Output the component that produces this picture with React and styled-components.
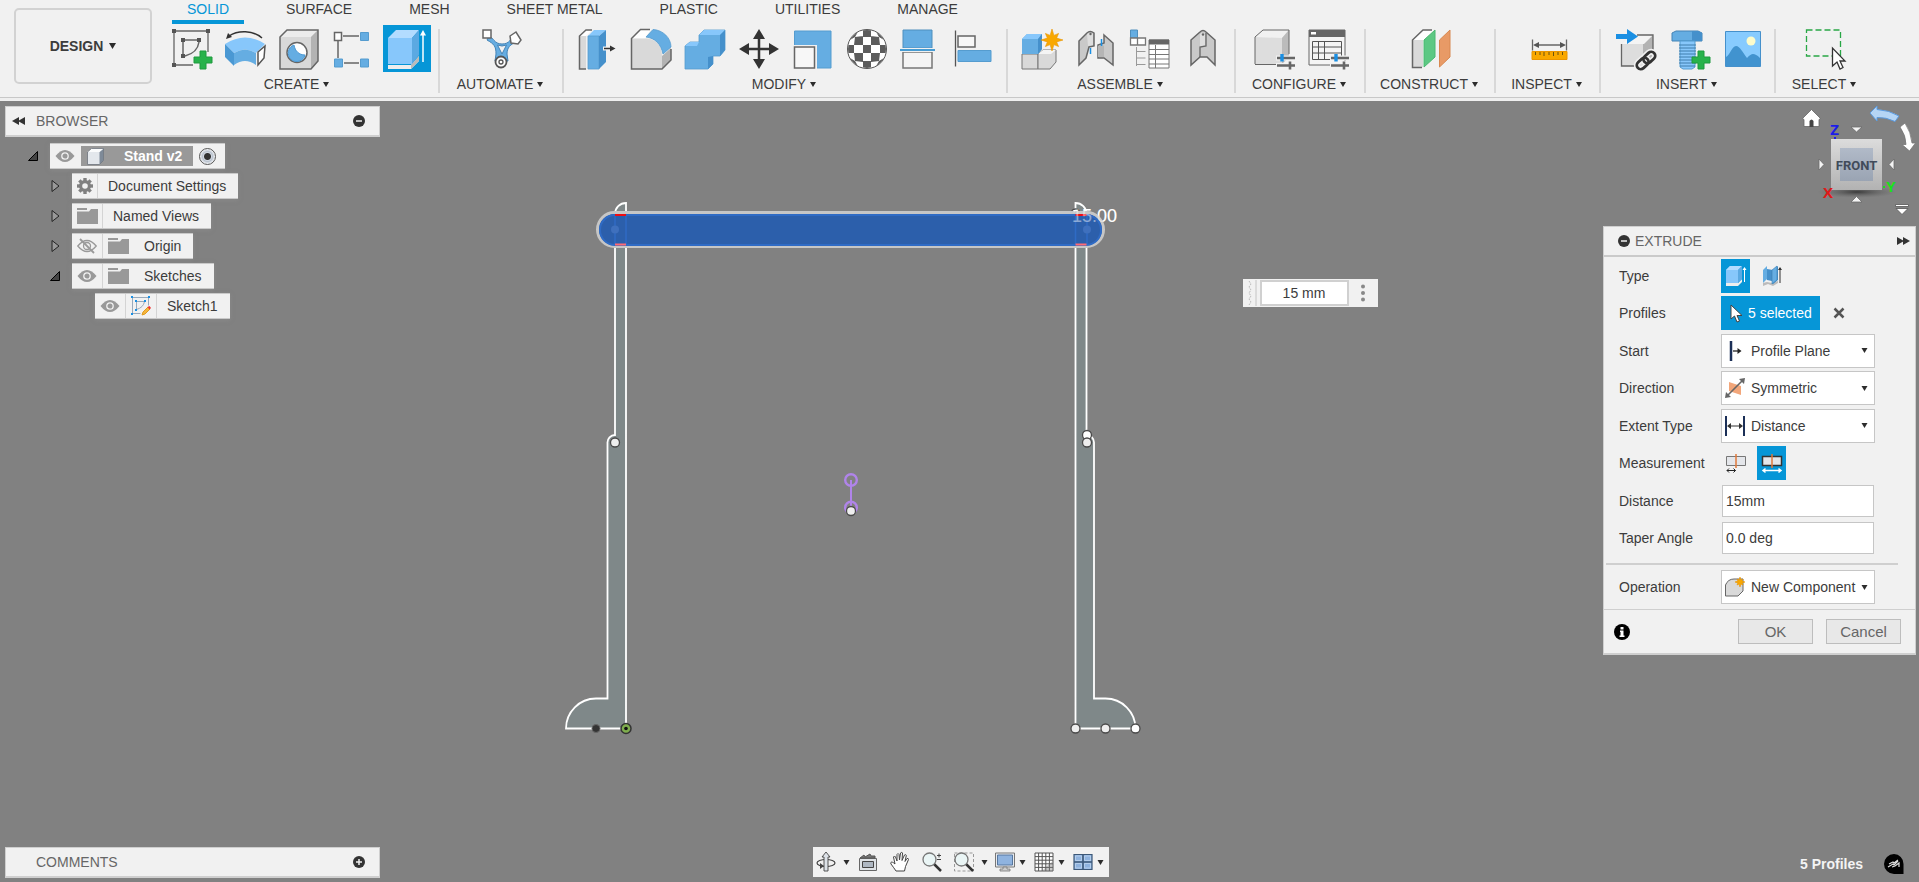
import React, { useState } from 'react'
import styled, { createGlobalStyle } from 'styled-components'

const GlobalStyle = createGlobalStyle`
  * {
    box-sizing: border-box;
  }
  body {
    margin: 0;
    font-family: "Liberation Sans", Arial, sans-serif;
    font-size: 14px;
    line-height: 16px;
    color: #3c3c3c;
    background: #818181;
  }
  button, input, select {
    font: inherit;
    color: inherit;
    margin: 0;
    padding: 0;
  }
  button {
    cursor: pointer;
  }
  svg {
    display: block;
    flex: none;
    overflow: visible;
  }
`

/* ---------- ribbon ---------- */

const Page = styled.div`
  display: flex;
  flex-direction: column;
  min-height: 100vh;
`

const Toolbar = styled.header`
  display: flex;
  gap: 5px;
  padding: 0 0 1px 14px;
  background: #f1f1f1;
  border-bottom: 1px solid #c8c8c8;
`

const ToolbarFrame = styled.div`
  padding-bottom: 3px;
  background: #efefef;
`

const DesignButton = styled.button`
  display: flex;
  align-items: center;
  justify-content: center;
  gap: 6px;
  width: 138px;
  height: 76px;
  margin-top: 8px;
  font-weight: bold;
  background: #f1f1f1;
  border: 2px solid #d2d2d2;
  border-radius: 5px;
`

const Ribbon = styled.div`
  flex: 1;
  min-width: 0;
`

const Tabs = styled.nav`
  display: flex;
  gap: 27px;
  padding-left: 15px;
`

const Tab = styled.a`
  height: 24px;
  padding: 0 15px;
  line-height: 18px;
  text-decoration: none;
  color: ${({ $active }) => ($active ? '#0696d7' : '#3c3c3c')};
  border-bottom: 4px solid ${({ $active }) => ($active ? '#0696d7' : 'transparent')};
`

const Groups = styled.div`
  display: flex;
  padding-top: 1px;
`

const Group = styled.section`
  display: flex;
  flex-direction: column;
  align-items: center;
  width: ${({ $width }) => $width}px;
  padding: 0 8px;
  background: linear-gradient(#d8d8d8, #d8d8d8) right 4px / 2px 64px no-repeat;
  &:last-child {
    background: none;
  }
`

const GroupIcons = styled.div`
  display: flex;
  gap: 6px;
`

const ToolButton = styled.button`
  display: flex;
  align-items: center;
  justify-content: center;
  width: 48px;
  height: 47px;
  border: 0;
  background: ${({ $active }) => ($active ? '#0696d7' : 'none')};
`

const GroupLabel = styled.button`
  display: flex;
  align-items: center;
  gap: 4px;
  height: 24px;
  padding-right: 4px;
  border: 0;
  background: none;
  white-space: nowrap;
`

/* ---------- workspace ---------- */

const Workspace = styled.main`
  position: relative;
  flex: 1;
  display: flex;
  flex-direction: column;
  justify-content: space-between;
  min-height: 720px;
`

const Scene = styled.svg`
  position: absolute;
  inset: 0;
  width: 100%;
  height: 100%;
`

const Docks = styled.div`
  position: relative;
  display: flex;
  justify-content: space-between;
  align-items: flex-start;
  padding: 5px 3px 0 5px;
`

const LeftDock = styled.aside`
  width: 375px;
`

const RightDock = styled.aside`
  display: flex;
  flex-direction: column;
  align-items: flex-end;
  width: 313px;
`

const PanelBar = styled.div`
  display: flex;
  align-items: center;
  justify-content: space-between;
  width: 375px;
  height: 31px;
  padding: 0 14px 0 6px;
  color: #666;
  background: #f1f1f1;
  border: 1px solid #cfcfcf;
  border-bottom-width: 2px;
`

const PanelTitle = styled.h2`
  flex: 1;
  margin: 0;
  padding-left: ${({ $indent }) => $indent}px;
  font-size: 14px;
  font-weight: normal;
`

const IconButton = styled.button`
  display: flex;
  border: 0;
  background: none;
`

const Tree = styled.ul`
  display: flex;
  flex-direction: column;
  gap: 4px;
  margin: 6px 0 0;
  padding: 0;
  list-style: none;
`

const TreeRow = styled.li`
  display: flex;
  align-items: center;
  gap: 12px;
  height: 26px;
  padding-left: ${({ $indent }) => $indent}px;
`

const TreeItem = styled.div`
  display: flex;
  align-items: center;
  height: 26px;
  background: #f1f1f1;
  border: solid #c9c9c9;
  border-width: 1px 0;
  box-shadow: 0 1px 4px rgba(150, 150, 150, 0.5);
`

const Cell = styled.span`
  display: flex;
  align-items: center;
  justify-content: center;
  width: ${({ $width }) => $width || 31}px;
  height: 24px;
  border-right: 1px solid ${({ $plain }) => ($plain ? 'transparent' : '#d4d4d4')};
`

const TreeText = styled.span`
  padding: 0 12px 0 10px;
  white-space: nowrap;
`

const RootName = styled.span`
  display: flex;
  align-items: center;
  gap: 20px;
  width: 112px;
  height: 20px;
  padding-left: 6px;
  font-weight: bold;
  white-space: nowrap;
  color: #fff;
  background: #999;
`

const RootRadio = styled.input`
  appearance: none;
  width: 17px;
  height: 17px;
  margin: 0 9px 0 6px;
  border: 1px solid #555;
  border-radius: 50%;
  background: radial-gradient(circle, #333 0 3px, #d3dae3 4px, #b9c2ce 5px, #fff 8px);
`

/* ---------- view cube ---------- */

const CubeBox = styled.svg`
  width: 118px;
  height: 110px;
`

/* ---------- floating value ---------- */

const ValueBox = styled.div`
  position: absolute;
  left: calc(50% + 283px);
  top: 178px;
  display: flex;
  align-items: center;
  width: 135px;
  height: 28px;
  padding-left: 5px;
  background: #f1f1f1;
`

const ValueInput = styled.input`
  width: 89px;
  height: 26px;
  margin-left: 4px;
  text-align: center;
  background: #fff;
  border: 2px solid #d0d0d0;
`

const MoreButton = styled(IconButton)`
  flex: 1;
  justify-content: center;
`

/* ---------- extrude dialog ---------- */

const Dialog = styled.form`
  width: 313px;
  margin-top: 10px;
  background: #f1f1f1;
  border: 1px solid #cfcfcf;
  border-bottom-width: 2px;
`

const DialogHead = styled.div`
  display: flex;
  align-items: center;
  height: 30px;
  padding: 0 5px 0 14px;
  color: #666;
  border-bottom: 2px solid #cacaca;
`

const Fields = styled.div`
  display: flex;
  flex-direction: column;
  justify-content: space-between;
  height: 298px;
  padding: 2px 0 0 15px;
`

const Field = styled.div`
  display: flex;
  align-items: center;
  height: 34px;
  & > :first-child {
    width: 102px;
  }
`

const OperationField = styled(Field)`
  height: 44px;
  padding-left: 15px;
`

const Divider = styled.hr`
  width: 292px;
  margin: 8px 0 0 2px;
  border: 0;
  border-top: 2px solid #cfcfcf;
`

const Choice = styled.button`
  display: flex;
  align-items: center;
  justify-content: center;
  width: 29px;
  height: 34px;
  margin-right: 7px;
  border: 0;
  background: ${({ $active }) => ($active ? '#0696d7' : 'none')};
`

const SelectionButton = styled.button`
  display: flex;
  align-items: center;
  gap: 5px;
  width: 99px;
  height: 34px;
  margin-right: 13px;
  padding-left: 9px;
  color: #fff;
  white-space: nowrap;
  border: 0;
  background: #0696d7;
`

const SelectFrame = styled.div`
  position: relative;
  display: flex;
  align-items: center;
  width: 154px;
  height: 34px;
  padding-left: 3px;
  background: #fff;
  border: 1px solid #c6c6c6;
`

const Select = styled.select`
  flex: 1;
  min-width: 0;
  height: 32px;
  padding-left: 6px;
  appearance: none;
  border: 0;
  background: none;
`

const SelectCaret = styled.span`
  position: absolute;
  right: 6px;
  pointer-events: none;
`

const TextInput = styled.input`
  width: 152px;
  height: 32px;
  margin-left: 1px;
  padding-left: 3px;
  background: #fff;
  border: 1px solid #c6c6c6;
`

const DialogFoot = styled.div`
  display: flex;
  align-items: center;
  gap: 13px;
  height: 44px;
  padding: 0 14px 0 10px;
  border-top: 1px solid #cfcfcf;
`

const FootButton = styled.button`
  width: 75px;
  height: 25px;
  font-size: 15px;
  color: #666;
  background: #e8e8e8;
  border: 1px solid #bdbdbd;
`

const Spacer = styled.span`
  flex: 1;
`

/* ---------- bottom bar ---------- */

const BottomBar = styled.footer`
  position: relative;
  display: grid;
  grid-template-columns: 1fr auto 1fr;
  align-items: start;
  padding: 0 2px 4px 5px;
`

const NavBar = styled.div`
  display: flex;
  align-items: center;
  gap: 4px;
  width: 296px;
  height: 30px;
  background: #f1f1f1;
`

const NavGroup = styled.div`
  display: flex;
`

const NavButton = styled.button`
  display: flex;
  align-items: center;
  justify-content: center;
  width: ${({ $width }) => $width}px;
  height: 30px;
  border: 0;
  background: none;
`

const Status = styled.div`
  display: flex;
  align-items: center;
  align-self: end;
  justify-content: flex-end;
  gap: 21px;
  height: 28px;
  padding-right: 13px;
  font-weight: bold;
  color: #f4f4f4;
`

/* ---------- drawings ---------- */

const Caret = ({ w = 6, h = 5 }) => (
  <svg width={w} height={h} viewBox="0 0 6 5"><path d="M0 0h6L3 5z" fill="#2c2c2c" /></svg>
)

const Glyph = ({ size = 40, children }) => (
  <svg width={size} height={size} viewBox={`0 0 ${size} ${size}`} fill="none" aria-hidden="true">{children}</svg>
)

const Plus = ({ x, y }) => (
  <path d={`M${x - 9} ${y - 3}h6v-6h6v6h6v6h-6v6h-6v-6h-6z`} fill="#28b24b" stroke="#1f9a3e" />
)

const Sliders = () => (
  <g strokeWidth="2.6">
    <path d="M22 29h20M22 36.500h20M36 32v9" stroke="#f1f1f1" strokeWidth="5" />
    <path d="M23 29h18M23 36.500h18M36 32.500v8" stroke="#666" />
    <path d="M28 25v7.500" stroke="#1a8fe3" strokeWidth="3.4" />
  </g>
)

const Star = ({ x, y, r }) => {
  const pts = []
  for (let i = 0; i < 16; i++) {
    const a = (i * Math.PI) / 8 - Math.PI / 2
    const d = i % 2 ? r * 0.45 : i % 4 ? r * 0.85 : r
    pts.push(`${(x + d * Math.cos(a)).toFixed(1)},${(y + d * Math.sin(a)).toFixed(1)}`)
  }
  return <polygon points={pts.join(' ')} fill="#f9a800" stroke="#e89400" strokeWidth=".6" />
}

const SketchIcon = () => (
  <Glyph>
    <path d="M5 2h30M3 4v30M37 4v19M5 36h17" stroke="#666" strokeWidth="1.3" />
    <path d="M12 13v12M14 11h12M28 13c-1 7-6 12-14 14" stroke="#666" strokeWidth="1.5" />
    <path d="M1 0h4v4H1zM35 0h4v4h-4zM1 34h4v4H1zM10 9h4v4h-4zM26 9h4v4h-4zM10 25h4v4h-4z" fill="#555" />
    <Plus x={32} y={31} />
  </Glyph>
)

const BendIcon = () => (
  <Glyph>
    <path d="M4 7C13 1 28 1 37 9" stroke="#333" strokeWidth="1.5" />
    <path d="M1 10l2-6 4 4z" fill="#333" />
    <path d="M0 15Q20 2 40 15l-9 9q-11-7-22 0z" fill="#87c7fb" />
    <path d="M0 15l9 9v13l-9-9z" fill="#4a98d3" />
    <path d="M9 24q11-7 22 0v12q-11-8-22 0z" fill="#65ade2" />
    <path d="M33 23l7-6-1 12-6 7z" fill="#fff" stroke="#555" strokeWidth="1.5" />
  </Glyph>
)

const HoleIcon = () => (
  <Glyph>
    <path d="M1 8l7-7h31v31l-7 8H1z" fill="#d9d9d9" />
    <path d="M1 8l7-7h31l-7 7z" fill="#ececec" />
    <path d="M32 8l7-7v31l-7 8z" fill="#b3b3b3" />
    <path d="M1 8l7-7h31v31l-7 8H1z" stroke="#666" strokeWidth="1.5" />
    <circle cx="18" cy="23.5" r="10" fill="#fff" stroke="#666" strokeWidth="1.5" />
    <path d="M15 16c1 6 5 10 11 10a8.500 8.500 0 1 1-11-10z" fill="#65ade2" stroke="#4a98d3" />
  </Glyph>
)

const PatternIcon = () => (
  <Glyph>
    <path d="M10 7h16M5 12v17M11 34h15" stroke="#666" strokeWidth="1.5" />
    <path d="M1.500 3.500h7v8h-7z" fill="#fff" stroke="#666" strokeWidth="1.5" />
    <path d="M27.500 3.500h8v8h-8zM1.500 30h8v8h-8zM27.500 30h8v8h-8z" fill="#65ade2" stroke="#559ccf" />
  </Glyph>
)

const ExtrudeIcon = () => (
  <Glyph>
    <path d="M1 36h23l8-9v5l-8 8H1z" fill="#eee" />
    <path d="M24 36l8-9v5l-8 8z" fill="#bbb" />
    <path d="M1 9l8-8h23l-7 8z" fill="#b3dcff" />
    <path d="M1 9h24v26H1z" fill="#87c7fb" />
    <path d="M25 9l7-8v25l-7 9z" fill="#5ba9e2" />
    <path d="M36 5v28" stroke="#fff" strokeWidth="1.5" />
    <path d="M33 6.500L36 1l3 5.500z" fill="#fff" />
  </Glyph>
)

const AutomateIcon = () => (
  <Glyph>
    <path d="M7 7c4 1 5 8 13 8s9-6 11-8l4 6c-7 2-10 6-10 12l1 7H13l1-7c0-8-2-10-9-14z" fill="#65ade2" stroke="#4583b5" />
    <path d="M15.500 16q4.500 2 9 0L20 25z" fill="#f1f1f1" stroke="#4583b5" />
    <path d="M1 1h8v8H1z" fill="#fff" stroke="#666" strokeWidth="1.5" />
    <path d="M28 7l6-4 5 8-3 4-7-1z" fill="#fff" stroke="#666" strokeWidth="1.5" />
    <circle cx="19" cy="33" r="5.5" fill="#fff" stroke="#555" strokeWidth="1.8" />
    <circle cx="19" cy="33" r="2" stroke="#555" strokeWidth="1.3" />
  </Glyph>
)

const PressPullIcon = () => (
  <Glyph>
    <path d="M2.500 7L9 1h6l-6 6v33H2.500z" fill="#fff" />
    <path d="M2.500 7H9v33H2.500z" fill="#d9d9d9" />
    <path d="M9 40H2.500V7L9 1h6" stroke="#666" strokeWidth="1.5" />
    <path d="M11 7l6-6h12l-7 6z" fill="#87c7fb" />
    <path d="M11 7h11v33H11z" fill="#65ade2" stroke="#559ccf" strokeWidth=".8" />
    <path d="M22 7l7-6v32l-7 7z" fill="#4590cb" />
    <path d="M26 19.500h9" stroke="#f1f1f1" strokeWidth="4" />
    <path d="M27 19.500h7" stroke="#333" strokeWidth="1.5" />
    <path d="M33 16.500l5.500 3-5.500 3z" fill="#333" />
  </Glyph>
)

const FilletIcon = () => (
  <Glyph>
    <path d="M.5 9.500l9-9H20l-6 9z" fill="#fff" />
    <path d="M.5 9.500H15C25 9.500 31 17 31 27v13H.5z" fill="#d9d9d9" />
    <path d="M31 27l9-8v12l-9 9z" fill="#b3b3b3" />
    <path d="M19 .5H9.500l-9 9V40H31l9-9V20" stroke="#666" strokeWidth="1.5" />
    <path d="M15 8L22 .5C32 1 40 9 40 18l-8 7C30 15 24 9 15 8z" fill="#65ade2" stroke="#559ccf" strokeWidth=".8" />
  </Glyph>
)

const CombineIcon = () => (
  <Glyph>
    <path d="M0 17l5-4h9V6l5-5h21v20l-5 6h-7v8l-5 5H0z" fill="#65ade2" stroke="#559ccf" strokeWidth=".8" />
    <path d="M0 17l5-4h9l-2 4zM14 6l5-5h21l-5 5z" fill="#87c7fb" />
    <path d="M35 6l5-5v20l-5 6zM23 28l5-1v8l-5 5z" fill="#4590cb" />
  </Glyph>
)

const MoveIcon = () => (
  <Glyph>
    <path d="M20 8v24M8 20h24" stroke="#333" strokeWidth="2.5" />
    <path d="M20 0l6 10H14zM20 40l6-10H14zM0 20l10-6v12zM40 20l-10-6v12z" fill="#333" />
  </Glyph>
)

const ScaleIcon = () => (
  <Glyph>
    <path d="M1.500 2H38v37H1.500z" fill="#65ade2" stroke="#559ccf" />
    <path d="M0 16h24v25H0z" fill="#f1f1f1" />
    <path d="M1.500 18h20v21h-20z" fill="#f7f7f7" stroke="#666" strokeWidth="1.5" />
  </Glyph>
)

const SphereIcon = () => (
  <Glyph>
    <clipPath id="ball"><circle cx="20" cy="20" r="19" /></clipPath>
    <circle cx="20" cy="20" r="19.5" fill="#fff" stroke="#555" />
    <path clipPath="url(#ball)" fill="#5c5c5c" d="M16 0h8v8h-8zM8 8l8-1v9H7zM24 7l8 1 1 8h-9zM0 16h7v8H0zM16 16h8v8h-8zM33 16h7v8h-7zM7 24h9v9l-8-1zM24 24h9l-1 8-8 1zM16 32h8v8h-8zM4 4l5-4 3 1-4 7-5 3zM36 4l-5-4-3 1 4 7 5 3zM4 36l5 4 3-1-4-7-5-3zM36 36l-5 4-3-1 4-7 5-3z" />
  </Glyph>
)

const SplitIcon = () => (
  <Glyph>
    <path d="M2 1h29v18H2z" fill="#65ade2" stroke="#4f8fbd" />
    <path d="M2 23h29v16H2z" fill="#f4f4f4" stroke="#777" strokeWidth="1.5" />
    <path d="M-1 21h35" stroke="#f1f1f1" strokeWidth="4" />
    <path d="M-1 21h35" stroke="#0e7fc9" strokeWidth="1.5" />
  </Glyph>
)

const AlignIcon = () => (
  <Glyph>
    <path d="M.5 1.500v36" stroke="#555" strokeWidth="1.3" />
    <path d="M3 7h17v11H3z" fill="#f7f7f7" stroke="#666" strokeWidth="1.5" />
    <path d="M3 21.500h33v11H3z" fill="#65ade2" stroke="#559ccf" />
  </Glyph>
)

const NewComponentIcon = () => (
  <Glyph>
    <path d="M1 25h16v15H1z" fill="#d9d9d9" stroke="#777" />
    <path d="M17 25l5-4h13v12l-6 7H17z" fill="#d9d9d9" stroke="#777" />
    <path d="M17 25l5-4h13l-5 4z" fill="#f4f4f4" />
    <path d="M1 10l5-5h15v15l-4 5H1z" fill="#65ade2" />
    <path d="M1 10l5-5h15l-4 5z" fill="#87c7fb" />
    <path d="M17 10l4-5v15l-4 5z" fill="#4590cb" />
    <Star x={31} y={11} r={11} />
  </Glyph>
)

const JointIcon = () => (
  <Glyph>
    <path d="M4 12l8-8q3-3 7 0v13l-5 1-3 11-7 7z" fill="#c9c9c9" stroke="#666" strokeWidth="1.5" />
    <path d="M12 5q3-2 6 0v11l-5 1z" fill="#dedede" />
    <circle cx="15.5" cy="5" r="1.2" fill="#666" />
    <path d="M29 6l9 8v22l-9-7h-6V16l6-2z" fill="#c9c9c9" stroke="#666" strokeWidth="1.5" />
    <path d="M23 17q3-2 6 0v11h-6z" fill="#b5b5b5" />
    <path d="M15.500 19v6M26.500 10v7" stroke="#1a8fe3" strokeWidth="1.5" />
  </Glyph>
)

const StructureIcon = () => (
  <Glyph>
    <path d="M1.500 1h7v8h-7z" fill="#65ade2" stroke="#4f8fbd" />
    <path d="M1.500 9h7v7h-7zM8.500 9h8v7h-8z" fill="#fff" stroke="#777" strokeWidth="1.3" />
    <path d="M7.500 18v19M7.500 22.500h9M7.500 29h9M7.500 35.500h9" stroke="#999" />
    <path d="M20 11h20v28H20z" fill="#fff" stroke="#777" />
    <path d="M20 10.500h20v5H20z" fill="#666" />
    <path d="M20 20.500h20M20 25.500h20M20 30h20M20 35h20M26.500 16v23" stroke="#777" />
  </Glyph>
)

const RigidJointIcon = () => (
  <Glyph>
    <path d="M8 11l9-8q3-3 6 0l9 8v25l-8-8h-7l-9 8z" fill="#c9c9c9" stroke="#666" strokeWidth="1.5" />
    <path d="M17 5q3-2 5 0v12l-5 1z" fill="#dedede" />
    <path d="M17 28V18l6-1V4" stroke="#666" strokeWidth="1.3" />
    <circle cx="20" cy="5.5" r="1.2" fill="#666" />
  </Glyph>
)

const ConfigureIcon = () => (
  <Glyph>
    <path d="M1 8l8-7h26v27l-8 8H1z" fill="#ddd" />
    <path d="M1 8l8-7h26l-7 8z" fill="#f1f1f1" />
    <path d="M28 9l7-8v27l-7 7z" fill="#bbb" />
    <path d="M1 35V8l8-7h26v24M1 35.500h22" stroke="#666" />
    <Sliders />
  </Glyph>
)

const ConfigTableIcon = () => (
  <Glyph>
    <path d="M1 1h36v35H1z" fill="#f5f5f5" stroke="#666" />
    <path d="M1 1h36v7H1z" fill="#666" />
    <path d="M3 3h5v2.500H3z" fill="#fff" />
    <path d="M4.500 12.500h29v18h-29zM4.500 18h29M4.500 24h29M10.500 12.500v18M16.500 12.500v18" stroke="#555" />
    <Sliders />
  </Glyph>
)

const ConstructIcon = () => (
  <Glyph>
    <path d="M1.500 11L12 1h11L13 11v27H1.500z" fill="#fff" />
    <path d="M1.500 11H12v27H1.500z" fill="#d9d9d9" />
    <path d="M11 38.500H1.500V11L12 1h9" stroke="#666" strokeWidth="1.5" />
    <path d="M13 11L24 1v27L13 38z" fill="#5cc883" stroke="#49b871" />
    <path d="M28.500 11L39 1v27L28.500 38z" fill="#e89a66" stroke="#d88850" />
  </Glyph>
)

const MeasureIcon = () => (
  <Glyph>
    <path d="M3.500 10.500v11M37.500 10.500v11M7 16h27" stroke="#666" strokeWidth="1.3" />
    <path d="M4 16l6-3v6zM37 16l-6-3v6z" fill="#555" />
    <path d="M3 22.500h35v8H3z" fill="#f9a800" stroke="#eb9500" />
    <path d="M6.500 23v3M11 23v3M15 23v4M20 23v3M24.500 23v4M29 23v3M33.500 23v3" stroke="#6b5310" />
  </Glyph>
)

const InsertLinkIcon = () => (
  <Glyph>
    <path d="M6.500 15l9-9H38v22l-8 9H6.500z" fill="#ddd" />
    <path d="M28 15l10-9v22l-8 9h-2z" fill="#b3b3b3" />
    <path d="M6.500 15l9-9H38l-9 9z" fill="#f4f4f4" />
    <path d="M6.500 15v22H20M22 6h16v17" stroke="#666" strokeWidth="1.3" />
    <path d="M1 5h11V0l11 7.500L12 15v-5H1z" fill="#1a8fe3" />
    <g transform="rotate(-42 31 31.500)">
      <rect x="20" y="27.5" width="13" height="8" rx="4" stroke="#f1f1f1" strokeWidth="6" />
      <rect x="29" y="27.5" width="13" height="8" rx="4" stroke="#f1f1f1" strokeWidth="6" />
      <rect x="20" y="27.5" width="13" height="8" rx="4" stroke="#333" strokeWidth="2.8" />
      <rect x="29" y="27.5" width="13" height="8" rx="4" stroke="#333" strokeWidth="2.8" />
    </g>
  </Glyph>
)

const BoltIcon = () => (
  <Glyph>
    <path d="M3 4l4-2h22l4 2v8H3z" fill="#65ade2" stroke="#4583b5" />
    <path d="M23 2h6l4 2v8H23z" fill="#4590cb" />
    <path d="M11 12h15v26l-3 2h-9l-3-2z" fill="#87c7fb" stroke="#559ccf" />
    <path d="M10 16h17M10 19h17M10 22h17M10 25h17M10 28h17M10 31h17M10 34h17M11 37h15" stroke="#3f7dac" />
    <Plus x={32} y={31} />
  </Glyph>
)

const ImageIcon = () => (
  <Glyph>
    <path d="M2.500 2.500h35v35h-35z" fill="#87cbfe" stroke="#4590cb" />
    <path d="M3 28c4-2 6-11 10-11s7 7 11 12c3-3 4-4 6-4s4 1 7 4v8H3z" fill="#4193cf" />
    <circle cx="28" cy="12" r="4.5" fill="#fdfccb" />
  </Glyph>
)

const SelectIcon = () => (
  <Glyph>
    <path d="M.5 1h34v26H.5z" stroke="#28a745" strokeWidth="1.3" strokeDasharray="6 3" />
    <path d="M26.500 19v18l4.500-4 3 7 3-1.500-3-6.500h5z" fill="#fff" stroke="#333" strokeWidth="1.3" />
  </Glyph>
)

const RIBBON = [
  { label: 'CREATE', width: 283, icons: [SketchIcon, BendIcon, HoleIcon, PatternIcon, ExtrudeIcon] },
  { label: 'AUTOMATE', width: 124, icons: [AutomateIcon] },
  { label: 'MODIFY', width: 444, icons: [PressPullIcon, FilletIcon, CombineIcon, MoveIcon, ScaleIcon, SphereIcon, SplitIcon, AlignIcon] },
  { label: 'ASSEMBLE', width: 228, icons: [NewComponentIcon, JointIcon, StructureIcon, RigidJointIcon] },
  { label: 'CONFIGURE', width: 130, icons: [ConfigureIcon, ConfigTableIcon] },
  { label: 'CONSTRUCT', width: 130, icons: [ConstructIcon] },
  { label: 'INSPECT', width: 105, icons: [MeasureIcon] },
  { label: 'INSERT', width: 175, icons: [InsertLinkIcon, BoltIcon, ImageIcon] },
  { label: 'SELECT', width: 100, icons: [SelectIcon] },
]

const TABS = ['SOLID', 'SURFACE', 'MESH', 'SHEET METAL', 'PLASTIC', 'UTILITIES', 'MANAGE']

const Rewind = ({ flip }) => (
  <svg width="13" height="8" viewBox="0 0 13 8">
    <path d={flip ? 'M0 0l7 4-7 4zM6 0l7 4-7 4z' : 'M7 0L0 4l7 4zM13 0L6 4l7 4z'} fill="#333" />
  </svg>
)

const RoundSign = ({ plus }) => (
  <svg width="12" height="12" viewBox="0 0 12 12">
    <circle cx="6" cy="6" r="6" fill="#333" />
    <path d={plus ? 'M3 6h6M6 3v6' : 'M3 6h6'} stroke="#f1f1f1" strokeWidth="1.5" />
  </svg>
)

const Eye = ({ off }) => (
  <svg width="20" height="14" viewBox="0 0 20 14" fill="none">
    {off ? (
      <g stroke="#999" strokeWidth="1.3">
        <path d="M.8 7Q10-4 19.200 7 10 18 .8 7z" />
        <circle cx="10" cy="7" r="3.5" />
        <path d="M3 0l14 14" strokeWidth="1.8" />
      </g>
    ) : (
      <g>
        <path d="M.5 7Q10-5 19.500 7 10 19 .5 7z" fill="#999" />
        <circle cx="10" cy="7" r="3.2" stroke="#f1f1f1" strokeWidth="1.3" />
      </g>
    )}
  </svg>
)

const Folder = () => (
  <svg width="21" height="16" viewBox="0 0 21 16">
    <path d="M0 0h10v2H0zM0 3.500h12L14 1h7v15H0z" fill="#999" />
  </svg>
)

const Gear = () => (
  <svg width="16" height="16" viewBox="-8 -8 16 16">
    {[0, 45, 90, 135].map((a) => (
      <path key={a} d="M-1.700-8h3.400v16h-3.400z" fill="#808080" transform={`rotate(${a})`} />
    ))}
    <circle r="6" fill="#808080" />
    <circle r="2.8" fill="#f1f1f1" />
  </svg>
)

const SmallCube = () => (
  <svg width="17" height="17" viewBox="0 0 17 17">
    <path d="M.5 4l4-3.500h12v12l-4 4H.5z" fill="#e3e7ec" />
    <path d="M12.500 4l4-3.500v12l-4 4z" fill="#7e8a98" />
    <path d="M.5 4l4-3.500h12l-4 3.500z" fill="#fafbfc" />
    <path d="M.5 16.500V4l4-3.500h12v12l-4 4z" fill="none" stroke="#6d747c" strokeWidth=".8" />
  </svg>
)

const SketchItem = () => (
  <svg width="20" height="20" viewBox="0 0 20 20" fill="none">
    <path d="M1.500 1.500h16v8M1.500 1.500v16h8" stroke="#9ab" />
    <path d="M5.500 5.500h8M5.500 5.500v8M13.500 5.500q-1 6-8 8" stroke="#9ab" />
    <path d="M0 0h2v2H0zM17 0h2v2h-2zM0 17h2v2H0zM4 4h2v2H4zM13 4h2v2h-2zM4 13h2v2H4z" fill="#1a8fe3" />
    <path d="M12 16l5-5 2 2-5 5-3 1z" fill="#f5b53c" stroke="#e09b20" />
    <path d="M16.500 11l2-1 1.500 2-1.500 1.500z" fill="#e33" />
  </svg>
)

const Closed = () => (
  <svg width="9" height="14" viewBox="0 0 9 14"><path d="M1 1.500v11L8 7z" fill="#999" stroke="#222" /></svg>
)

const Open = () => (
  <svg width="10" height="10" viewBox="0 0 10 10"><path d="M9.500.5v9h-9z" fill="#444" stroke="#000" /></svg>
)

const Tri = ({ d }) => <path d={d} fill="#f4f4f4" stroke="#6a6a6a" strokeWidth=".8" />

const ViewCube = () => (
  <CubeBox viewBox="1798 106 118 110" role="img" aria-label="View cube">
    <defs>
      <linearGradient id="face" x2="0" y2="1"><stop stopColor="#dcdcdc" /><stop offset="1" stopColor="#b2b2b2" /></linearGradient>
      <linearGradient id="core" x2="0" y2="1"><stop stopColor="#b1bac8" /><stop offset="1" stopColor="#9aa4b3" /></linearGradient>
      <radialGradient id="shade"><stop stopColor="#333" stopOpacity=".9" /><stop offset="1" stopColor="#666" stopOpacity="0" /></radialGradient>
    </defs>
    <path d="M1802.500 118.500l9-9 9 9-1.500 1v7h-15v-7z" fill="#fff" stroke="#666" strokeWidth=".8" />
    <path d="M1809.500 127v-6q2-3 4 0v6z" fill="#444" />
    <path d="M1870 113l7-7v3.500q12 .5 22 6.500l-4 5.500q-9-4.500-18-4v3.500z" fill="#b5d5f5" stroke="#5b9be0" />
    <path d="M1900 127l5-4q6 9 7 20h3.500l-6 8-7.500-6.500h4q0-9-6-17.500z" fill="#fff" stroke="#777" strokeWidth=".8" />
    <ellipse cx="1857" cy="192" rx="40" ry="6" fill="url(#shade)" />
    <rect x="1831" y="139" width="51" height="51" fill="url(#face)" />
    <rect x="1840" y="148" width="33" height="33" fill="url(#core)" />
    <text x="1856.5" y="170" textAnchor="middle" fontFamily="Roboto, sans-serif" fontSize="13" fontWeight="bold" fill="#414b5a">FRONT</text>
    <g fontFamily="Open Sans, sans-serif" fontSize="15" fontWeight="bold" textAnchor="middle">
      <text x="1834.5" y="135" fill="#1c1ce8">Z</text>
      <text x="1828" y="198" fill="#e01818">X</text>
      <text x="1891" y="192" fill="#19e219">Y</text>
    </g>
    <path d="M1834 137h2v2h-2z" fill="#1c1ce8" />
    <path d="M1883 186h2v2h-2z" fill="#19e219" />
    <Tri d="M1851 127h11l-5.500 5z" />
    <Tri d="M1851 202h11l-5.500-5.500z" />
    <Tri d="M1819 159v11l5-5.500z" />
    <Tri d="M1894 159v11l-5-5.500z" />
    <path d="M1895.500 204.500h13v2h-13zM1896 208.500h12l-6 6z" fill="#fff" stroke="#555" strokeWidth=".8" />
  </CubeBox>
)

const Point = ({ x, y, fill = '#eee' }) => (
  <circle cx={x} cy={y} r="4.5" fill={fill} stroke="#4a4a4a" strokeWidth="1.3" />
)

const SizeText = ({ opacity }) => (
  <text x="1072" y="222" fontFamily="Liberation Sans, sans-serif" fontSize="18" fill="#fff" opacity={opacity}>15.00</text>
)

const LEG = 'M626 203V728.500H566A30 30 0 0 1 596 698.500H607.500V443A7.500 7.500 0 0 1 615 435V214A11 11 0 0 1 626 203z'

const Model = () => (
  <Scene viewBox="0 101 1919 781" preserveAspectRatio="xMidYMid slice" role="img" aria-label="Model">
    <g fill="#7f8889" stroke="#fff" strokeWidth="1.8">
      <path d={LEG} />
      <path d={LEG} transform="matrix(-1 0 0 1 1701.500 0)" />
    </g>
    <SizeText />
    <Point x={1075.5} y={213.5} fill="#fff" />
    <rect x="597.5" y="212.5" width="506" height="34" rx="17" fill="#2c5fab" stroke="#c6c6c6" strokeWidth="3" />
    <rect x="600" y="215" width="501" height="30" rx="15" fill="none" stroke="#2f6bc5" strokeWidth="2" />
    <path d="M615 215v29M626 215v29M1075.500 215v29M1087 215v29" stroke="#2f6bc5" strokeWidth="1.5" />
    <path d="M615 215h11M1075.500 215h11" stroke="#f00c12" strokeWidth="2" />
    <path d="M615 244.500h11M1075.500 244.500h11" stroke="#ff6b74" strokeWidth="2" />
    <circle cx="615" cy="229.5" r="4" fill="#3f70bd" />
    <circle cx="1087" cy="229.5" r="4" fill="#3f70bd" />
    <SizeText opacity=".45" />
    <Point x={615} y={442.5} />
    <Point x={1087} y={435} fill="#fff" />
    <Point x={1087} y={442.5} />
    <g fill="none" stroke="#b084ea" strokeWidth="2.4">
      <circle cx="851" cy="480" r="5.8" />
      <circle cx="851" cy="507.5" r="5.8" />
      <path d="M851 480v28" strokeWidth="2" />
    </g>
    <Point x={851} y={511} />
    <circle cx="596" cy="728.5" r="4" fill="#333" stroke="#666" />
    <circle cx="626" cy="728.5" r="5" fill="#7fae4e" stroke="#333" strokeWidth="1.5" />
    <circle cx="626" cy="728.5" r="1.8" fill="#111" />
    <Point x={1075.5} y={728.5} />
    <Point x={1105.5} y={728.5} />
    <Point x={1135.5} y={728.5} fill="#fff" />
  </Scene>
)

/* dialog icons, 20px */

const SolidType = () => (
  <Glyph size={20}>
    <path d="M0 17h12l4-4v3l-4 4H0z" fill="#eee" />
    <path d="M0 4l4-4h12l-4 4v13H0z" fill="#87c7fb" />
    <path d="M0 4l4-4h12l-4 4z" fill="#b3dcff" />
    <path d="M12 4l4-4v13l-4 4z" fill="#5ba9e2" />
    <path d="M18.500 3v13" stroke="#fff" />
    <path d="M16.500 4l2-3 2 3z" fill="#fff" />
  </Glyph>
)

const ThinType = () => (
  <Glyph size={20}>
    <path d="M1 17l4-1 5 1 6-2v2l-5 3-5-2-5 2z" fill="#bbb" />
    <path d="M1 4l4-4v13l-4 4z" fill="#65ade2" />
    <path d="M5 3l6 1 5-4v14l-5 4-1-3-5-1z" fill="#4590cb" />
    <path d="M10 4l5-4v14l-5 4z" fill="#65ade2" stroke="#3b7cb0" strokeWidth=".6" />
    <path d="M18 2v15" stroke="#333" />
    <path d="M16 4l2-3 2 3z" fill="#333" />
  </Glyph>
)

const Pointer = () => (
  <svg width="13" height="19" viewBox="0 0 13 19">
    <path d="M1 1v14l3.500-3 2.500 6 2.500-1L7 11.500h5z" fill="#fff" stroke="#444" />
  </svg>
)

const PlaneIcon = () => (
  <Glyph size={20}>
    <path d="M6 0v20" stroke="#1b2f57" strokeWidth="2.5" />
    <path d="M8 10h6" stroke="#222" strokeWidth="1.3" />
    <path d="M12.500 7l4 3-4 3z" fill="#222" />
  </Glyph>
)

const SymmetricIcon = () => (
  <Glyph size={20}>
    <path d="M4 4l12 4v9L4 13z" fill="#f2a67a" />
    <path d="M3 17L17 3" stroke="#666" strokeWidth="1.6" />
    <path d="M0 20l1-6 5 5zM20 0l-6 1 5 5z" fill="#666" />
  </Glyph>
)

const DistanceIcon = () => (
  <Glyph size={20}>
    <path d="M1 0v20M19 0v20" stroke="#1b2f57" strokeWidth="2" />
    <path d="M4 10h12" stroke="#333" />
    <path d="M2 10l4-3v6zM18 10l-4-3v6z" fill="#333" />
  </Glyph>
)

const MeasureMode = ({ whole }) => (
  <Glyph size={20}>
    <path d="M.5 3.500h19v9H.5z" fill="#e4e6ea" stroke={whole ? '#333' : '#777'} strokeWidth={whole ? 1.5 : 1} />
    <path d="M10 1v14" stroke="#e0793a" strokeWidth="1.5" />
    {whole ? (
      <path d="M1 17.500h18M3.500 15.500l-2.500 2 2.500 2M16.500 15.500l2.500 2-2.500 2" stroke="#fff" strokeWidth="1.5" />
    ) : (
      <path d="M1 17.500h8.500M3 15.500l-2 2 2 2M7.500 15.500l2 2-2 2" stroke="#222" />
    )}
  </Glyph>
)

const NewBodyIcon = () => (
  <Glyph size={20}>
    <path d="M.5 8Q3 2 9 2h9v12l-5 5H.5z" fill="#d9d9d9" stroke="#666" />
    <Star x={15} y={5} r={5} />
  </Glyph>
)

const InfoIcon = () => (
  <svg width="16" height="16" viewBox="0 0 16 16">
    <circle cx="8" cy="8" r="8" fill="#000" />
    <path d="M6.500 3h3v2.500h-3zM6 6.500h3.500v5h1V13H5.500v-1.500h1V8H6z" fill="#fff" />
  </svg>
)

/* navigation icons */

const OrbitIcon = () => (
  <Glyph size={20}>
    <ellipse cx="10" cy="11" rx="9" ry="3.5" stroke="#444" strokeWidth="1.2" />
    <path d="M8 19V5H6l4-5 4 5h-2v14z" fill="#dde2e8" stroke="#444" strokeWidth=".9" />
    <path d="M4 11l4 3-4 3" fill="#444" />
  </Glyph>
)

const CaptureIcon = () => (
  <Glyph size={20}>
    <path d="M1.500 6.500h17v12h-17z" fill="#dfe3e7" stroke="#666" />
    <path d="M4.500 9.500h11v6h-11z" fill="#aeb7c2" stroke="#444" />
    <path d="M2 6l4-3 1 2 5-3 1 2h4v2z" fill="#777" stroke="#555" />
  </Glyph>
)

const HandIcon = () => (
  <Glyph size={20}>
    <path d="M6 19q-2-3-5-7c-1-2 1-3 4 0L3.500 5q1-2 2 0L7 9V2.500q1-2 2 0L9.500 8l1-7q1.500-1.500 2 0L12 8.500l2.500-5.500q1.500-1 1.800.5L15 9.500l2-3q1.500-.5 1.500 1l-3 7-1 4.500z" fill="#fff" stroke="#444" />
  </Glyph>
)

const Lens = ({ frame }) => (
  <Glyph size={20}>
    {frame && <path d="M.5 1h19v18H.5z" stroke="#999" strokeDasharray="3 2" />}
    <path d="M12 12l7 7" stroke="#333" strokeWidth="2.5" />
    <circle cx="7.5" cy="7.5" r="6.5" fill="#eaf5f5" stroke="#777" strokeWidth="1.3" />
    {!frame && <path d="M15 3.500h4M17 1.500v4M15 7.500h4" stroke="#444" />}
  </Glyph>
)

const DisplayIcon = () => (
  <Glyph size={20}>
    <path d="M.5 1h19v14H.5z" fill="#e9ebee" stroke="#777" />
    <path d="M2.500 3h15v10h-15z" fill="#8fb3df" stroke="#56779f" />
    <path d="M8 15h4v2h3v2H5v-2h3z" fill="#ccc" stroke="#777" strokeWidth=".8" />
  </Glyph>
)

const GridIcon = () => (
  <Glyph size={20}>
    <path d="M1 1h18v18H1z" fill="#fff" />
    <path d="M1 1h18v18H1zM1 4.600h18M1 8.200h18M1 11.800h18M1 15.400h18M4.600 1v18M8.200 1v18M11.800 1v18M15.400 1v18" stroke="#555" />
    <path d="M14 13l5-4v10H8z" fill="#777" fillOpacity=".4" />
  </Glyph>
)

const ViewportIcon = () => (
  <Glyph size={20}>
    <path d="M1 2.500h18v15H1z" fill="#8fb3df" stroke="#3c5878" strokeWidth="1.2" />
    <path d="M10 2.500v15M1 10h18" stroke="#3c5878" strokeWidth="1.6" />
    <path d="M2.500 4h6v4.500h-6zM11.500 4h6v4.500h-6zM2.500 11.500h6V16h-6zM11.500 11.500h6V16h-6z" stroke="#bcd3ee" strokeWidth=".8" />
  </Glyph>
)

const LensFrame = () => <Lens frame />

const NAV = [
  { name: 'Orbit', icon: OrbitIcon, width: 26, caret: 14 },
  { name: 'Look at', icon: CaptureIcon, width: 22 },
  { name: 'Pan', icon: HandIcon, width: 34 },
  { name: 'Zoom', icon: Lens, width: 22 },
  { name: 'Zoom window', icon: LensFrame, width: 34, caret: 7 },
  { name: 'Display settings', icon: DisplayIcon, width: 26, caret: 9 },
  { name: 'Grid and snaps', icon: GridIcon, width: 26, caret: 9 },
  { name: 'Viewports', icon: ViewportIcon, width: 26, caret: 9 },
]

const SelectField = ({ id, label, icon, options, row: Row = Field }) => (
  <Row>
    <label htmlFor={id}>{label}</label>
    <SelectFrame>
      {icon}
      <Select id={id}>
        {options.map((o) => <option key={o}>{o}</option>)}
      </Select>
      <SelectCaret><Caret w={7} /></SelectCaret>
    </SelectFrame>
  </Row>
)

const ExtrudeDialog = () => {
  const [thin, setThin] = useState(false)
  const [whole, setWhole] = useState(true)
  const [distance, setDistance] = useState('15mm')
  const [taper, setTaper] = useState('0.0 deg')

  return (
    <Dialog onSubmit={(e) => e.preventDefault()}>
      <DialogHead>
        <IconButton type="button" aria-label="Collapse"><RoundSign /></IconButton>
        <PanelTitle $indent={5}>EXTRUDE</PanelTitle>
        <IconButton type="button" aria-label="Dock"><Rewind flip /></IconButton>
      </DialogHead>
      <Fields>
        <Field>
          <span>Type</span>
          <Choice type="button" aria-label="Extrude" $active={!thin} onClick={() => setThin(false)}><SolidType /></Choice>
          <Choice type="button" aria-label="Thin extrude" $active={thin} onClick={() => setThin(true)}><ThinType /></Choice>
        </Field>
        <Field>
          <span>Profiles</span>
          <SelectionButton type="button"><Pointer />5 selected</SelectionButton>
          <IconButton type="button" aria-label="Clear selection">
            <svg width="12" height="12" viewBox="0 0 12 12"><path d="M1.500 1.500l9 9M10.500 1.500l-9 9" stroke="#555" strokeWidth="2.5" /></svg>
          </IconButton>
        </Field>
        <SelectField id="start" label="Start" icon={<PlaneIcon />} options={['Profile Plane', 'Offset', 'Object']} />
        <SelectField id="direction" label="Direction" icon={<SymmetricIcon />} options={['Symmetric', 'One Side', 'Two Sides']} />
        <SelectField id="extent" label="Extent Type" icon={<DistanceIcon />} options={['Distance', 'All']} />
        <Field>
          <span>Measurement</span>
          <Choice type="button" aria-label="Half length" $active={!whole} onClick={() => setWhole(false)}><MeasureMode /></Choice>
          <Choice type="button" aria-label="Whole length" $active={whole} onClick={() => setWhole(true)}><MeasureMode whole /></Choice>
        </Field>
        <Field>
          <label htmlFor="distance">Distance</label>
          <TextInput id="distance" value={distance} onChange={(e) => setDistance(e.target.value)} />
        </Field>
        <Field>
          <label htmlFor="taper">Taper Angle</label>
          <TextInput id="taper" value={taper} onChange={(e) => setTaper(e.target.value)} />
        </Field>
      </Fields>
      <Divider />
      <SelectField id="operation" label="Operation" icon={<NewBodyIcon />} options={['New Component', 'New Body', 'Join', 'Cut']} row={OperationField} />
      <DialogFoot>
        <InfoIcon />
        <Spacer />
        <FootButton type="submit">OK</FootButton>
        <FootButton type="button">Cancel</FootButton>
      </DialogFoot>
    </Dialog>
  )
}

const App = () => {
  const [value, setValue] = useState('15 mm')

  return (
    <Page>
      <GlobalStyle />
      <ToolbarFrame>
        <Toolbar>
          <DesignButton>DESIGN <Caret w={7} h={6} /></DesignButton>
          <Ribbon>
            <Tabs>
              {TABS.map((tab, i) => <Tab key={tab} href="#" $active={i === 0}>{tab}</Tab>)}
            </Tabs>
            <Groups>
              {RIBBON.map((group) => (
                <Group key={group.label} $width={group.width}>
                  <GroupIcons>
                    {group.icons.map((Icon, i) => (
                      <ToolButton key={i} aria-label={`${group.label} ${i + 1}`} $active={Icon === ExtrudeIcon}><Icon /></ToolButton>
                    ))}
                  </GroupIcons>
                  <GroupLabel>{group.label}<Caret /></GroupLabel>
                </Group>
              ))}
            </Groups>
          </Ribbon>
        </Toolbar>
      </ToolbarFrame>

      <Workspace>
        <Model />
        <Docks>
          <LeftDock>
            <PanelBar>
              <IconButton aria-label="Collapse browser"><Rewind /></IconButton>
              <PanelTitle $indent={11}>BROWSER</PanelTitle>
              <IconButton aria-label="Minimize browser"><RoundSign /></IconButton>
            </PanelBar>
            <Tree>
              <TreeRow $indent={23}>
                <Open />
                <TreeItem>
                  <Cell $plain><Eye /></Cell>
                  <RootName><SmallCube />Stand v2</RootName>
                  <RootRadio type="radio" defaultChecked aria-label="Activate Stand v2" />
                </TreeItem>
              </TreeRow>
              <TreeRow $indent={46}>
                <Closed />
                <TreeItem>
                  <Cell $width={26}><Gear /></Cell>
                  <TreeText>Document Settings</TreeText>
                </TreeItem>
              </TreeRow>
              <TreeRow $indent={46}>
                <Closed />
                <TreeItem>
                  <Cell><Folder /></Cell>
                  <TreeText>Named Views</TreeText>
                </TreeItem>
              </TreeRow>
              <TreeRow $indent={46}>
                <Closed />
                <TreeItem>
                  <Cell><Eye off /></Cell>
                  <Cell $plain><Folder /></Cell>
                  <TreeText>Origin</TreeText>
                </TreeItem>
              </TreeRow>
              <TreeRow $indent={45}>
                <Open />
                <TreeItem>
                  <Cell><Eye /></Cell>
                  <Cell $plain><Folder /></Cell>
                  <TreeText>Sketches</TreeText>
                </TreeItem>
              </TreeRow>
              <TreeRow $indent={90}>
                <TreeItem>
                  <Cell><Eye /></Cell>
                  <Cell><SketchItem /></Cell>
                  <TreeText>Sketch1</TreeText>
                </TreeItem>
              </TreeRow>
            </Tree>
          </LeftDock>
          <RightDock>
            <ViewCube />
            <ExtrudeDialog />
          </RightDock>
        </Docks>

        <ValueBox>
          <svg width="8" height="26" viewBox="0 0 8 26" fill="none">
            <path d="M1 1l2 3-2 3 2 3-2 3 2 3-2 3 2 3-2 3" stroke="#bbb" strokeDasharray="2 1" />
            <path d="M8 0v26" stroke="#c4c4c4" />
          </svg>
          <ValueInput aria-label="Distance value" value={value} onChange={(e) => setValue(e.target.value)} />
          <MoreButton aria-label="More options">
            <svg width="4" height="18" viewBox="0 0 4 18" fill="#888"><circle cx="2" cy="2.5" r="2" /><circle cx="2" cy="9" r="2" /><circle cx="2" cy="15.5" r="2" /></svg>
          </MoreButton>
        </ValueBox>

        <BottomBar>
          <PanelBar>
            <PanelTitle $indent={24}>COMMENTS</PanelTitle>
            <IconButton aria-label="Expand comments"><RoundSign plus /></IconButton>
          </PanelBar>
          <NavBar>
            {NAV.map(({ name, icon: Icon, width, caret }) => (
              <NavGroup key={name}>
                <NavButton $width={width} aria-label={name}><Icon /></NavButton>
                {caret && <NavButton $width={caret} aria-label={`${name} options`}><Caret w={7} /></NavButton>}
              </NavGroup>
            ))}
          </NavBar>
          <Status>
            5 Profiles
            <svg width="20" height="20" viewBox="0 0 20 20" fill="none">
              <path d="M10 0a10 10 0 0 1 9.500 10v10H10A10 10 0 0 1 10 0z" fill="#000" />
              <path d="M4 13l5-3 1 1 4-4M5 10l4-2 1 1 4-3M8 13l3-1 4-3v4" stroke="#ddd" strokeWidth="1.2" />
            </svg>
          </Status>
        </BottomBar>
      </Workspace>
    </Page>
  )
}

export default App
